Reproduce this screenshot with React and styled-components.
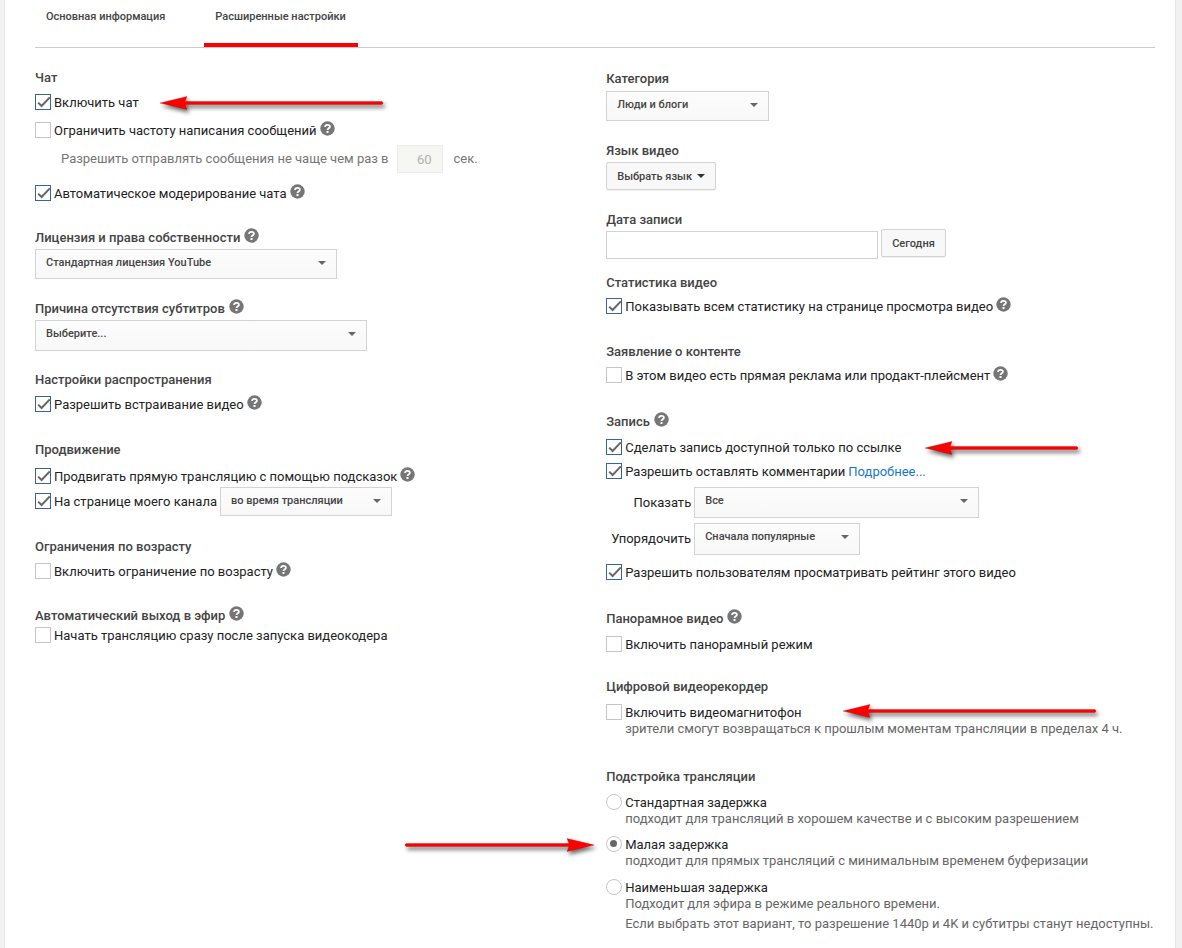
import React from 'react';
import styled, { createGlobalStyle, css } from 'styled-components';

const GlobalStyle = createGlobalStyle`
  * {
    box-sizing: border-box;
  }

  body {
    margin: 0;
    background: #f1f1f1;
    color: #222;
    font-family: Roboto, 'Liberation Sans', sans-serif;
    font-size: 13px;
    line-height: 20px;
  }

  input, select, button {
    font-family: inherit;
    margin: 0;
  }
`;

const Panel = styled.main`
  min-height: 100vh;
  margin: 0 6px 0 4px;
  padding: 0 20px 12px 30px;
  background: #fff;
  border: solid #e5e5e5;
  border-width: 0 1px;
  overflow: hidden;
`;

const Tabs = styled.nav`
  display: flex;
  gap: 27px;
  height: 48px;
  border-bottom: 1px solid #ccc;
`;

const Tab = styled.a`
  height: 47px;
  padding: 7px 12px 0 11px;
  font-size: 11px;
  font-weight: 500;
  color: #444;
  text-decoration: none;
  border-bottom: 4px solid ${(props) => (props.$active ? '#f00' : 'transparent')};
`;

const Columns = styled.form`
  display: grid;
  grid-template-columns: 51fr 49fr;
  align-items: start;
`;

const Column = styled.div`
  padding-top: ${(props) => props.$top}px;
`;

const Section = styled.section`
  margin-bottom: ${(props) => props.$space || 20}px;
`;

const Title = styled.h3`
  display: flex;
  gap: 4px;
  height: 20px;
  margin: 0 0 ${(props) => props.$gap || 0}px;
  font-size: 13px;
  font-weight: 500;
  color: #444;
`;

const Row = styled.div`
  position: relative;
  display: flex;
  align-items: center;
  gap: 3px;
  margin-top: ${(props) => props.$gap || 0}px;
`;

const CheckLabel = styled.label`
  display: flex;
  align-items: center;
  gap: 3px;
  height: 20px;
  white-space: nowrap;
`;

const Box = styled.span`
  display: grid;
  width: 16px;
  height: 16px;
  margin-bottom: 2px;

  input, svg {
    grid-area: 1 / 1;
    width: 16px;
    height: 16px;
  }

  svg {
    visibility: hidden;
    overflow: visible;
    pointer-events: none;
  }

  input:checked + svg {
    visibility: visible;
  }
`;

const CheckInput = styled.input`
  appearance: none;
  background: #fff;
  border: 1px solid #c6c6c6;

  &:checked {
    border-color: #36649c;
  }
`;

const RadioInput = styled.input`
  appearance: none;
  background: #fff;
  border: 1px solid #c6c6c6;
  border-radius: 50%;
`;

const HelpSvg = styled.svg`
  flex: none;
  align-self: flex-start;
  width: 15px;
  height: 15px;
`;

const SelectWrap = styled.span`
  position: relative;
  display: block;
  width: ${(props) => props.$width}px;
  max-width: 100%;
`;

const Select = styled.select`
  display: block;
  appearance: none;
  width: 100%;
  padding: 5px 28px ${(props) => props.$bottom}px 10px;
  font-size: 11px;
  font-weight: 500;
  line-height: 16px;
  color: #444;
  background: linear-gradient(#fcfcfc, #f8f8f8);
  border: 1px solid #d3d3d3;
  border-radius: 0;
`;

const Caret = styled.svg`
  width: 8px;
  height: 4px;
  fill: ${(props) => props.$color || '#666'};

  ${(props) =>
    props.$over &&
    css`
      position: absolute;
      top: 12px;
      right: 11px;
      pointer-events: none;
    `}
`;

const Button = styled.button`
  display: flex;
  align-items: center;
  gap: 5px;
  height: 28px;
  padding: 0 10px;
  font-size: 11px;
  font-weight: 500;
  color: #444;
  background: #f8f8f8;
  border: 1px solid #d3d3d3;
  border-radius: 2px;
  box-shadow: 0 1px 0 rgba(0, 0, 0, 0.05);
`;

const DateInput = styled.input`
  width: 272px;
  height: 28px;
  padding: 0 8px;
  font-size: 13px;
  border: 1px solid #d3d3d3;
`;

const DateRow = styled.div`
  display: flex;
  align-items: flex-end;
  gap: 3px;

  ${Button} {
    margin-bottom: 2px;
  }
`;

const LimitLabel = styled.label`
  display: flex;
  align-items: center;
  gap: 8px;
  margin: 4px 0 11px;
  padding-left: 26px;
  color: #767676;
`;

const LimitInput = styled.input`
  width: 46px;
  height: 28px;
  padding: 0 10px;
  margin-right: 3px;
  font-size: 13px;
  text-align: right;
  color: #b0b0b0;
  background: #f6f6f2;
  border: 1px solid #ebebeb;
`;

const Hint = styled.p`
  margin: 0;
  padding-left: 19px;
  line-height: 20px;
  color: #666;
`;

const HintGroup = styled.div`
  margin-top: -4px;
`;

const Link = styled.a`
  color: #167ac6;
  text-decoration: none;
`;

const SelectLabel = styled.label`
  width: 85px;
  text-align: right;
`;

const ArrowSvg = styled.svg`
  position: absolute;
  top: ${(props) => props.$top}px;
  left: ${(props) => props.$left}px;
  height: 14px;
  overflow: visible;
  pointer-events: none;
  filter: drop-shadow(2px 3px 2px rgba(0, 0, 0, 0.6));
`;

const Help = () => (
  <HelpSvg viewBox="0 0 15 15" aria-hidden="true">
    <circle cx="7.5" cy="7.5" r="7.2" fill="#767676" />
    <path d="M5.1 6.1 C5.1 3.1 9.9 3.1 9.9 5.8 C9.9 7.3 7.6 7.3 7.5 9" fill="none" stroke="#fff" strokeWidth="1.8" />
    <rect x="6.5" y="10" width="2" height="2" fill="#fff" />
  </HelpSvg>
);

const Arrow = ({ left, top = 3, length, right }) => (
  <ArrowSvg $left={left} $top={top} width={length} viewBox={`0 0 ${length} 14`} aria-hidden="true">
    <g transform={right ? `translate(${length} 0) scale(-1 1)` : undefined}>
      <path
        d={`M0 7 L27 0.5 L25 5.5 H${length - 2} Q${length} 7 ${length - 2} 8.5 H25 L27 13.5 Z`}
        fill="#f00"
        stroke="#a00"
        strokeWidth="0.3"
      />
    </g>
  </ArrowSvg>
);

const Check = ({ label, checked, help, gap, children }) => (
  <Row $gap={gap}>
    <CheckLabel>
      <Box>
        <CheckInput type="checkbox" defaultChecked={checked} />
        <svg viewBox="0 0 16 16">
          <path d="M3.2 8.6 L6.6 12 L14.8 3.4" fill="none" stroke="#666" strokeWidth="2" />
        </svg>
      </Box>
      {label}
    </CheckLabel>
    {help && <Help />}
    {children}
  </Row>
);

const Radio = ({ label, checked, gap, children }) => (
  <Row $gap={gap}>
    <CheckLabel>
      <Box>
        <RadioInput type="radio" name="latency" defaultChecked={checked} />
        <svg viewBox="0 0 16 16">
          <circle cx="7.5" cy="7.5" r="3.5" fill="#666" />
        </svg>
      </Box>
      {label}
    </CheckLabel>
    {children}
  </Row>
);

const Dropdown = ({ id, width, bottom = 7, value, label }) => (
  <SelectWrap $width={width}>
    <Select id={id} $bottom={bottom} aria-label={label}>
      <option>{value}</option>
    </Select>
    <Caret $over viewBox="0 0 8 4" aria-hidden="true">
      <path d="M0 0 H8 L4 4 Z" />
    </Caret>
  </SelectWrap>
);

const App = () => (
  <>
    <GlobalStyle />
    <Panel>
      <Tabs>
        <Tab href="#basic">Основная информация</Tab>
        <Tab href="#advanced" $active>Расширенные настройки</Tab>
      </Tabs>

      <Columns>
        <Column $top={20}>
          <Section $space={24}>
            <Title $gap={5}>Чат</Title>
            <Check label="Включить чат" checked>
              <Arrow left={125} length={224} />
            </Check>
            <Check label="Ограничить частоту написания сообщений" help gap={8} />
            <LimitLabel>
              Разрешить отправлять сообщения не чаще чем раз в
              <LimitInput type="text" defaultValue="60" disabled />
              сек.
            </LimitLabel>
            <Check label="Автоматическое модерирование чата" checked help />
          </Section>

          <Section>
            <Title $gap={1}>
              <label htmlFor="license">Лицензия и права собственности</label>
              <Help />
            </Title>
            <Dropdown id="license" width={302} value="Стандартная лицензия YouTube" />
          </Section>

          <Section $space={19}>
            <Title $gap={1}>
              <label htmlFor="captions">Причина отсутствия субтитров</label>
              <Help />
            </Title>
            <Dropdown id="captions" width={332} bottom={8} value="Выберите..." />
          </Section>

          <Section $space={25}>
            <Title $gap={5}>Настройки распространения</Title>
            <Check label="Разрешить встраивание видео" checked help />
          </Section>

          <Section $space={21}>
            <Title $gap={7}>Продвижение</Title>
            <Check label="Продвигать прямую трансляцию с помощью подсказок" checked help />
            <Check label="На странице моего канала" checked>
              <Dropdown width={172} bottom={6} value="во время трансляции" label="На странице моего канала" />
            </Check>
          </Section>

          <Section $space={24}>
            <Title $gap={5}>Ограничения по возрасту</Title>
            <Check label="Включить ограничение по возрасту" help />
          </Section>

          <Section>
            <Title>
              Автоматический выход в эфир
              <Help />
            </Title>
            <Check label="Начать трансляцию сразу после запуска видеокодера" />
          </Section>
        </Column>

        <Column $top={21}>
          <Section>
            <Title $gap={2}>
              <label htmlFor="category">Категория</label>
            </Title>
            <Dropdown id="category" width={163} value="Люди и блоги" />
          </Section>

          <Section>
            <Title $gap={1}>Язык видео</Title>
            <Button type="button">
              Выбрать язык
              <Caret $color="#333" viewBox="0 0 8 4" aria-hidden="true">
                <path d="M0 0 H8 L4 4 Z" />
              </Caret>
            </Button>
          </Section>

          <Section $space={14}>
            <Title $gap={-1}>
              <label htmlFor="recorded">Дата записи</label>
            </Title>
            <DateRow>
              <DateInput id="recorded" type="text" />
              <Button type="button">Сегодня</Button>
            </DateRow>
          </Section>

          <Section $space={25}>
            <Title $gap={4}>Статистика видео</Title>
            <Check label="Показывать всем статистику на странице просмотра видео" checked help />
          </Section>

          <Section $space={26}>
            <Title $gap={4}>Заявление о контенте</Title>
            <Check label="В этом видео есть прямая реклама или продакт-плейсмент" help />
          </Section>

          <Section $space={26}>
            <Title $gap={6}>
              Запись
              <Help />
            </Title>
            <Check label="Сделать запись доступной только по ссылке" checked>
              <Arrow left={319} length={154} />
            </Check>
            <Check label="Разрешить оставлять комментарии" checked gap={4}>
              <Link href="#comments">Подробнее...</Link>
            </Check>
            <Row $gap={5}>
              <SelectLabel htmlFor="show">Показать</SelectLabel>
              <Dropdown id="show" width={285} bottom={8} value="Все" />
            </Row>
            <Row $gap={5}>
              <SelectLabel htmlFor="order">Упорядочить</SelectLabel>
              <Dropdown id="order" width={166} bottom={9} value="Сначала популярные" />
            </Row>
            <Check label="Разрешить пользователям просматривать рейтинг этого видео" checked gap={8} />
          </Section>

          <Section $space={22}>
            <Title $gap={6}>
              Панорамное видео
              <Help />
            </Title>
            <Check label="Включить панорамный режим" />
          </Section>

          <Section $space={28}>
            <Title $gap={6}>Цифровой видеорекордер</Title>
            <Check label="Включить видеомагнитофон">
              <Arrow left={237} top={1} length={254} />
            </Check>
            <HintGroup>
              <Hint>зрители смогут возвращаться к прошлым моментам трансляции в пределах 4 ч.</Hint>
            </HintGroup>
          </Section>

          <Section>
            <Title $gap={6}>Подстройка трансляции</Title>
            <Radio label="Стандартная задержка" />
            <HintGroup>
              <Hint>подходит для трансляций в хорошем качестве и с высоким разрешением</Hint>
            </HintGroup>
            <Radio label="Малая задержка" checked gap={6}>
              <Arrow left={-202} length={190} right />
            </Radio>
            <HintGroup>
              <Hint>подходит для прямых трансляций с минимальным временем буферизации</Hint>
            </HintGroup>
            <Radio label="Наименьшая задержка" gap={7} />
            <HintGroup>
              <Hint>Подходит для эфира в режиме реального времени.</Hint>
              <Hint>Если выбрать этот вариант, то разрешение 1440p и 4K и субтитры станут недоступны.</Hint>
            </HintGroup>
          </Section>
        </Column>
      </Columns>
    </Panel>
  </>
);

export default App;
